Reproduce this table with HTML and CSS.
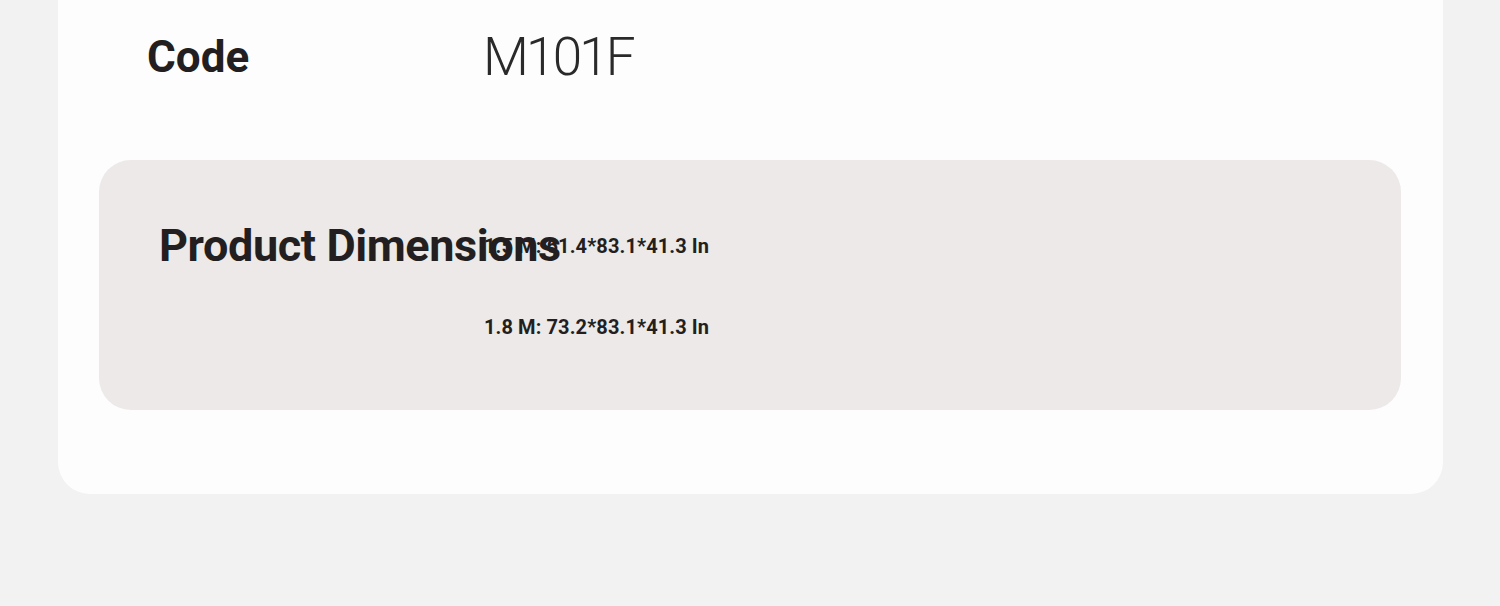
FILE: index.html
```html
<!DOCTYPE html>
<html>
<head>
<meta charset="utf-8">
<link rel="stylesheet" href="styles.css">
</head>
<body>
<div class="page">
  <div class="card">
    <div class="code-row">
      <div class="code-label">Code</div>
      <div class="code-value">M101F</div>
    </div>
    <div class="dims">
      <div class="dims-label">Product Dimensions</div>
      <div class="dims-values">
        <div class="dim">1.5 M: 61.4*83.1*41.3 In</div>
        <div class="dim">1.8 M: 73.2*83.1*41.3 In</div>
      </div>
    </div>
  </div>
</div>
</body>
</html>
```

FILE: styles.css
```css
html, body {
  margin: 0;
  padding: 0;
}
body {
  background: #f3f2f2;
  font-family: Roboto, "Liberation Sans", sans-serif;
  color: #231f20;
  width: 1500px;
  height: 606px;
  overflow: hidden;
}
.page {
  padding-left: 58px;
}
.card {
  width: 1385px;
  margin-top: -40px;
  background: #fdfdfd;
  border-radius: 0 0 32px 32px;
  padding: 40px 0 84px 0;
  box-sizing: border-box;
}
.code-row {
  display: grid;
  grid-template-columns: 336px 1fr;
  align-items: start;
  padding: 32px 0 0 89px;
  height: 160px;
  box-sizing: border-box;
}
.code-label {
  font-weight: 700;
  font-size: 44px;
  line-height: 50px;
}
.code-value {
  font-weight: 300;
  font-size: 53px;
  line-height: 50px;
  letter-spacing: -2.8px;
  color: #2a2a2a;
}
.dims {
  margin: 0 42px 0 41px;
  height: 250px;
  background: #ece9e8;
  border-radius: 32px;
  display: grid;
  grid-template-columns: 325px 1fr;
  padding: 64px 0 0 60px;
  box-sizing: border-box;
}
.dims-label {
  font-weight: 700;
  font-size: 45px;
  line-height: 44px;
  letter-spacing: -0.4px;
  white-space: nowrap;
}
.dims-values {
  display: flex;
  flex-direction: column;
  gap: 59px;
  padding-top: 11px;
}
.dim {
  font-weight: 700;
  font-size: 20px;
  line-height: 22px;
  letter-spacing: 0.1px;
  white-space: nowrap;
}
```
